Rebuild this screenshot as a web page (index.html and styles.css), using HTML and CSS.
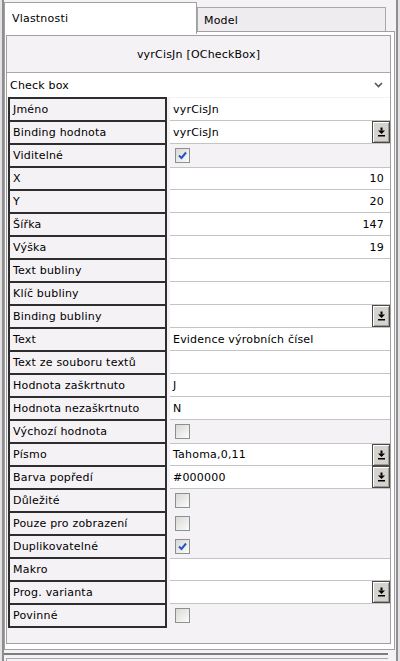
FILE: index.html
```html
<!DOCTYPE html>
<html lang="cs">
<head>
    <meta charset="UTF-8">
    <title>Vlastnosti</title>
    <link rel="stylesheet" href="styles.css">
</head>
<body>

<div class="frame">
    <div class="tabs">
        <div class="tab active">Vlastnosti</div>
        <div class="tab">Model</div>
    </div>

    <div class="panel">
        <div class="inner">
            <div class="title">vyrCisJn [OCheckBox]</div>
            <div class="combo">
                <span>Check box</span>
                <svg class="chevron" width="9" height="6" viewBox="0 0 9 6"><path d="M1 1 L4.5 4.5 L8 1" fill="none" stroke="#555" stroke-width="1.6"/></svg>
            </div>

            <div class="props">
                <div class="labels">
                    <div class="label">Jméno</div>
                    <div class="label">Binding hodnota</div>
                    <div class="label">Viditelné</div>
                    <div class="label">X</div>
                    <div class="label">Y</div>
                    <div class="label">Šířka</div>
                    <div class="label">Výška</div>
                    <div class="label">Text bubliny</div>
                    <div class="label">Klíč bubliny</div>
                    <div class="label">Binding bubliny</div>
                    <div class="label">Text</div>
                    <div class="label">Text ze souboru textů</div>
                    <div class="label">Hodnota zaškrtnuto</div>
                    <div class="label">Hodnota nezaškrtnuto</div>
                    <div class="label">Výchozí hodnota</div>
                    <div class="label">Písmo</div>
                    <div class="label">Barva popředí</div>
                    <div class="label">Důležité</div>
                    <div class="label">Pouze pro zobrazení</div>
                    <div class="label">Duplikovatelné</div>
                    <div class="label">Makro</div>
                    <div class="label">Prog. varianta</div>
                    <div class="label">Povinné</div>
                </div>

                <div class="values">
                    <div class="val field">vyrCisJn</div>
                    <div class="val field">vyrCisJn <span class="btn"><svg width="9" height="10" viewBox="0 0 9 10"><rect x="3.5" y="0.5" width="2" height="3"/><path d="M1 3.5 H8 L4.5 7 Z"/><rect x="1" y="8" width="7" height="1.5"/></svg></span></div>
                    <div class="val check"><span class="cb on"><svg width="11" height="11" viewBox="0 0 11 11"><path d="M2 5.5 L4.5 8 L9 2.5" fill="none" stroke="#2456c8" stroke-width="2"/></svg></span></div>
                    <div class="val field num">10</div>
                    <div class="val field num">20</div>
                    <div class="val field num">147</div>
                    <div class="val field num">19</div>
                    <div class="val field"></div>
                    <div class="val field"></div>
                    <div class="val field"><span class="btn"><svg width="9" height="10" viewBox="0 0 9 10"><rect x="3.5" y="0.5" width="2" height="3"/><path d="M1 3.5 H8 L4.5 7 Z"/><rect x="1" y="8" width="7" height="1.5"/></svg></span></div>
                    <div class="val field">Evidence výrobních čísel</div>
                    <div class="val field"></div>
                    <div class="val field">J</div>
                    <div class="val field">N</div>
                    <div class="val check"><span class="cb"></span></div>
                    <div class="val field">Tahoma,0,11 <span class="btn"><svg width="9" height="10" viewBox="0 0 9 10"><rect x="3.5" y="0.5" width="2" height="3"/><path d="M1 3.5 H8 L4.5 7 Z"/><rect x="1" y="8" width="7" height="1.5"/></svg></span></div>
                    <div class="val field">#000000 <span class="btn"><svg width="9" height="10" viewBox="0 0 9 10"><rect x="3.5" y="0.5" width="2" height="3"/><path d="M1 3.5 H8 L4.5 7 Z"/><rect x="1" y="8" width="7" height="1.5"/></svg></span></div>
                    <div class="val check"><span class="cb"></span></div>
                    <div class="val check"><span class="cb"></span></div>
                    <div class="val check"><span class="cb on"><svg width="11" height="11" viewBox="0 0 11 11"><path d="M2 5.5 L4.5 8 L9 2.5" fill="none" stroke="#2456c8" stroke-width="2"/></svg></span></div>
                    <div class="val field"></div>
                    <div class="val field"><span class="btn"><svg width="9" height="10" viewBox="0 0 9 10"><rect x="3.5" y="0.5" width="2" height="3"/><path d="M1 3.5 H8 L4.5 7 Z"/><rect x="1" y="8" width="7" height="1.5"/></svg></span></div>
                    <div class="val check"><span class="cb"></span></div>
                </div>
            </div>
        </div>
    </div>

    <div class="footer"><div class="footer-box"></div></div>
</div>

</body>
</html>
```

FILE: styles.css
```css
body {
    margin: 0;
    background: #e4e2e4;
    font-family: "DejaVu Sans", Verdana, sans-serif;
    font-size: 11px;
    letter-spacing: 0.2px;
    color: #000;
    overflow: hidden;
}

.frame {
    margin-left: 2px;
    width: 392px;
    height: 661px;
    border-left: 2px solid #8e8e8e;
    border-right: 2px solid #8e8e8e;
    background: #f5f2f6;
}

/* tabs */
.tabs {
    display: flex;
    padding-top: 2px;
    height: 29px;
}

.tab {
    box-sizing: border-box;
    border: 1px solid #a8a8a8;
    border-bottom: none;
}

.tab.active {
    position: relative;
    z-index: 1;
    width: 193px;
    height: 32px;
    padding: 4px 0 0 7px;
    line-height: 24px;
    background: #fff;
    border-color: #a0a0a0;
}

.tab:not(.active) {
    margin-top: 5px;
    width: 189px;
    height: 24px;
    padding-left: 6px;
    line-height: 25px;
    background: #efecf0;
}

/* main panel */
.panel {
    width: 391px;
    box-sizing: border-box;
    border: 1px solid #a0a0a0;
    background: #fff;
    padding: 3px 3px 5px 1px;
}

.inner {
    border: 1px solid #a0a0a0;
    background: #f5f2f6;
    height: 607px;
}

.title {
    height: 36px;
    line-height: 37px;
    text-align: center;
}

.combo {
    height: 24px;
    border-top: 1px solid #a8a8a8;
    background: #fff;
    display: flex;
    align-items: center;
    justify-content: space-between;
    padding: 0 7px 0 3px;
}

/* property grid */
.props {
    display: flex;
    gap: 3px;
    padding-left: 1px;
}

.labels {
    width: 159px;
    box-sizing: border-box;
    border: 1px solid #2e2e2e;
}

.label {
    height: 21px;
    line-height: 21px;
    border: 1px solid #2e2e2e;
    padding-left: 3px;
    white-space: nowrap;
}

.values {
    width: 220px;
    padding-top: 1px;
}

.val {
    height: 23px;
    box-sizing: border-box;
    display: flex;
    align-items: center;
}

.val.field {
    background: #fff;
    border-bottom: 1px solid #c4c4c4;
    padding-left: 3px;
}

.val.check + .val.field {
    border-top: 1px solid #c4c4c4;
}

.val.num {
    justify-content: flex-end;
    padding-right: 6px;
}

.val.check {
    padding-left: 5px;
}

.cb {
    width: 13px;
    height: 13px;
    border: 1px solid #8e8f90;
    background: linear-gradient(135deg, #d8d8d4, #fcfcfc);
    display: flex;
    align-items: center;
    justify-content: center;
}

.btn {
    margin-left: auto;
    width: 18px;
    height: 22px;
    box-sizing: border-box;
    border: 1px solid #4a4a4a;
    background: #d6d3ce;
    box-shadow: inset 1px 1px #fff, inset -1px -1px #9c9a96;
    display: flex;
    align-items: center;
    justify-content: center;
}

/* bottom strip */
.footer {
    margin-top: 3px;
    width: 384px;
    border-top: 2px solid #7e7e7e;
    height: 7px;
}

.footer-box {
    margin: 3px 0 0 2px;
    border-top: 1px solid #a8a8a8;
    border-left: 1px solid #a8a8a8;
    height: 4px;
}
```
